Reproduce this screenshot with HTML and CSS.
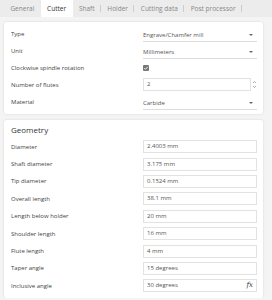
FILE: index.html
```html
<!DOCTYPE html>
<html>
<head>
    <title>Tool</title>
    <link rel="stylesheet" href="styles.css">
</head>
<body>
    <div class="tabs">
        <div class="tab">General</div>
        <div class="tab active">Cutter</div>
        <div class="tab sep">Shaft</div>
        <div class="tab sep">Holder</div>
        <div class="tab sep">Cutting data</div>
        <div class="tab sep">Post processor</div>
    </div>

    <div class="card">
        <div class="row">
            <span class="label">Type</span>
            <div class="select">Engrave/Chamfer mill<span class="caret"></span></div>
        </div>
        <div class="row">
            <span class="label">Unit</span>
            <div class="select">Millimeters<span class="caret"></span></div>
        </div>
        <div class="row">
            <span class="label">Clockwise spindle rotation</span>
            <div class="check-wrap">
                <svg class="check" width="6" height="6" viewBox="0 0 6 6">
                    <rect width="6" height="6" rx="1" fill="#777"/>
                    <path d="M1.3 3.1 L2.5 4.3 L4.8 1.8" stroke="#fff" stroke-width="0.9" fill="none"/>
                </svg>
            </div>
        </div>
        <div class="row">
            <span class="label">Number of flutes</span>
            <div class="number">
                <div class="input">2</div>
                <svg class="spin" width="5" height="9" viewBox="0 0 5 9">
                    <path d="M1 3 L2.5 1.5 L4 3 M1 6 L2.5 7.5 L4 6" stroke="#888" stroke-width="0.7" fill="none"/>
                </svg>
            </div>
        </div>
        <div class="row">
            <span class="label">Material</span>
            <div class="select">Carbide<span class="caret"></span></div>
        </div>
    </div>

    <div class="card geo">
        <div class="heading">Geometry</div>
        <div class="row"><span class="label">Diameter</span><div class="input">2.4003 mm</div></div>
        <div class="row"><span class="label">Shaft diameter</span><div class="input">3.175 mm</div></div>
        <div class="row"><span class="label">Tip diameter</span><div class="input">0.1524 mm</div></div>
        <div class="row"><span class="label">Overall length</span><div class="input">38.1 mm</div></div>
        <div class="row"><span class="label">Length below holder</span><div class="input">20 mm</div></div>
        <div class="row"><span class="label">Shoulder length</span><div class="input">16 mm</div></div>
        <div class="row"><span class="label">Flute length</span><div class="input">4 mm</div></div>
        <div class="row"><span class="label">Taper angle</span><div class="input">15 degrees</div></div>
        <div class="row"><span class="label">Inclusive angle</span><div class="input fx">30 degrees<i>fx</i></div></div>
    </div>
</body>
</html>
```

FILE: styles.css
```css
body {
    margin: 0;
    background-color: #f4f4f4;
    font-family: "Open Sans", sans-serif;
    font-size: 6px;
    color: #333;
}

.tabs {
    display: flex;
    align-items: center;
    height: 17px;
    background-color: #ececec;
    padding-left: 4px;
}
.tab {
    padding: 0 6.4px;
    line-height: 17px;
    font-size: 6.5px;
    color: #888;
    position: relative;
}
.tab.active {
    background-color: #fff;
    color: #333;
}
.tab.sep::after {
    content: "";
    position: absolute;
    right: 0;
    top: 5px;
    height: 7px;
    border-right: 1px solid #ccc;
}

.card {
    background-color: #fff;
    margin: 5px 9px 0 4px;
    padding: 3px 6px 4px 7px;
    box-shadow: 0 0 2px rgba(0, 0, 0, 0.15);
    border-radius: 2px;
}
.card.geo {
    margin-top: 6px;
    padding-top: 1px;
    padding-bottom: 3px;
}

.heading {
    font-size: 8px;
    color: #333;
    line-height: 17px;
}

.row {
    display: flex;
    align-items: center;
    height: 17px;
}
.geo .row {
    height: 17.4px;
}
.label {
    width: 132px;
    color: #444;
}

.select {
    flex: 1;
    display: flex;
    justify-content: space-between;
    align-items: center;
    height: 11px;
    border-bottom: 1px solid #ddd;
    margin-top: 4px;
    color: #555;
}
.caret {
    width: 0;
    height: 0;
    border-left: 2px solid transparent;
    border-right: 2px solid transparent;
    border-top: 2px solid #666;
    margin-right: 4px;
}

.check-wrap {
    flex: 1;
    display: flex;
}

.number {
    flex: 1;
    display: flex;
    align-items: center;
}
.input {
    flex: 1;
    height: 11px;
    line-height: 11px;
    border: 1px solid #e2e2e2;
    padding: 0 3px;
    color: #555;
    display: flex;
    justify-content: space-between;
}
.spin {
    margin-left: 1px;
}
.fx i {
    font-family: "DejaVu Serif", serif;
    font-size: 7px;
    color: #333;
}
```
